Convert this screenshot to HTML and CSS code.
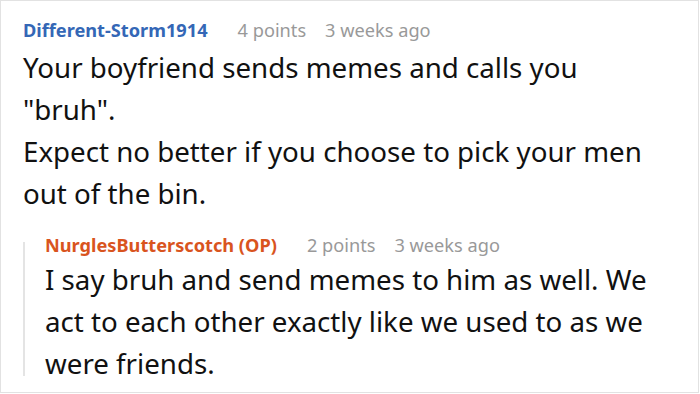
FILE: index.html
```html
<!DOCTYPE html>
<html>
<head>
<meta charset="utf-8">
<link rel="stylesheet" href="styles.css">
</head>
<body>
<div class="thread">
  <div class="comment">
    <div class="meta">
      <span class="author">Different-Storm1914</span>
      <span class="info">4 points</span>
      <span class="info">3 weeks ago</span>
    </div>
    <div class="body">
      <p>Your boyfriend sends memes and calls you "bruh".</p>
      <p>Expect no better if you choose to pick your men out of the bin.</p>
    </div>
  </div>
  <div class="reply">
    <div class="meta">
      <span class="author op">NurglesButterscotch (OP)</span>
      <span class="info">2 points</span>
      <span class="info">3 weeks ago</span>
    </div>
    <div class="body">
      <p>I say bruh and send memes to him as well. We act to each other exactly like we used to as we were friends.</p>
    </div>
  </div>
</div>
</body>
</html>
```

FILE: styles.css
```css
html, body {
  margin: 0;
  padding: 0;
  background: #fff;
}
.thread {
  box-sizing: border-box;
  width: 699px;
  height: 393px;
  overflow: hidden;
  border: 1px solid #e2e2e2;
  padding: 16px 20px 0 22px;
  font-family: "Noto Sans", sans-serif;
  color: #111;
}
.meta {
  display: flex;
  font-size: 18.2px;
  line-height: 26px;
}
.author {
  font-weight: 700;
  color: #3467b6;
  margin-right: 30px;
}
.author.op {
  color: #d9541e;
}
.info {
  color: #999;
  margin-right: 19px;
}
.body {
  font-size: 27.7px;
  line-height: 42px;
}
.body p {
  margin: 0;
}
.comment .body {
  width: 645px;
  margin-top: 3px;
}
.reply {
  margin-top: 18px;
  padding-left: 22px;
  background: linear-gradient(#e4e4e4, #e4e4e4) no-repeat 0 10px / 2px calc(100% - 18px);
}
.reply .body {
  width: 632px;
}
```
